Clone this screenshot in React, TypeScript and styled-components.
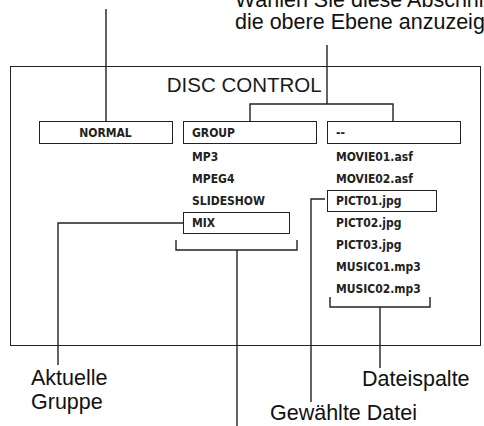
import React, { FC } from 'react'
import styled, { createGlobalStyle } from 'styled-components'

const GlobalStyle = createGlobalStyle`
	html, body {
		margin: 0;
		padding: 0;
		background: #ffffff;
	}
	body {
		font-family: 'Liberation Sans', Arial, sans-serif;
		color: #111111;
	}
`

type Entry = { label: string; boxed?: number }

const groups: Entry[] = [
	{ label: 'MP3' },
	{ label: 'MPEG4' },
	{ label: 'SLIDESHOW' },
	{ label: 'MIX', boxed: 107 }
]

const files: Entry[] = [
	{ label: 'MOVIE01.asf' },
	{ label: 'MOVIE02.asf' },
	{ label: 'PICT01.jpg', boxed: 110 },
	{ label: 'PICT02.jpg' },
	{ label: 'PICT03.jpg' },
	{ label: 'MUSIC01.mp3' },
	{ label: 'MUSIC02.mp3' }
]

const Leaders: FC = () => (
	<Lines width={484} height={426} viewBox="0 0 484 426">
		<g fill="none" stroke="#222" strokeWidth={1.4}>
			<path d="M106 9 V121" />
			<path d="M327 45 V104" />
			<path d="M250 121 V104 H393 V121" />
			<path d="M183 223 H58 V365" />
			<path d="M325 199 H311 V402" />
			<path d="M176 240 V250 H297 V240" />
			<path d="M237 250 V426" />
			<path d="M330 297 V307 H430 V297" />
			<path d="M380 307 V368" />
		</g>
	</Lines>
)

const App: FC = () => {
	return (
		<Page>
			<GlobalStyle />
			<Caption>
				Wählen Sie diese Abschnitte, um
				<br />
				die obere Ebene anzuzeigen.
			</Caption>

			<Panel>
				<Title>DISC CONTROL</Title>
				<Columns>
					<Column>
						<HeadBox $center>NORMAL</HeadBox>
					</Column>

					<Column>
						<HeadBox>GROUP</HeadBox>
						{groups.map((g) => (
							<Item key={g.label} $width={g.boxed}>
								{g.label}
							</Item>
						))}
					</Column>

					<Column>
						<HeadBox>--</HeadBox>
						{files.map((f) => (
							<Item key={f.label} $width={f.boxed}>
								{f.label}
							</Item>
						))}
					</Column>
				</Columns>
			</Panel>

			<Label $x={31} $y={366}>
				Aktuelle
				<br />
				Gruppe
			</Label>
			<Label $x={362} $y={367}>
				Dateispalte
			</Label>
			<Label $x={270} $y={401}>
				Gewählte Datei
			</Label>

			<Leaders />
		</Page>
	)
}

export default App

const Page = styled.div`
	position: relative;
	width: 484px;
	height: 426px;
	overflow: hidden;
	background: #fff;
`

const Caption = styled.div`
	height: 66px;
	padding-left: 235px;
	box-sizing: border-box;
	font-size: 21.5px;
	line-height: 22px;
	white-space: nowrap;
	margin-top: -11px;
	margin-bottom: 11px;
`

const Panel = styled.section`
	margin-left: 10px;
	width: 471px;
	height: 280px;
	box-sizing: border-box;
	border: 1.5px solid #222;
	padding: 8px 0 0 27.5px;
`

const Title = styled.h1`
	margin: 0 0 26px -30px;
	font-weight: normal;
	font-size: 20.5px;
	line-height: 20px;
	text-align: center;
	color: #1a1a1a;
`

const Columns = styled.div`
	display: grid;
	grid-template-columns: repeat(3, 134px);
	column-gap: 10px;
	align-items: start;
`

const Column = styled.div`
	display: flex;
	flex-direction: column;
	align-items: flex-start;
`

const listFont = `
	font-family: 'DejaVu Sans Condensed', 'DejaVu Sans', sans-serif;
	font-weight: bold;
	font-size: 12px;
	color: #222;
	white-space: nowrap;
`

const HeadBox = styled.div<{ $center?: boolean }>`
	${listFont}
	width: 134px;
	height: 23px;
	box-sizing: border-box;
	border: 1.5px solid #222;
	display: flex;
	align-items: center;
	justify-content: ${({ $center }) => ($center ? 'center' : 'flex-start')};
	padding-left: ${({ $center }) => ($center ? '0' : '8.5px')};
	margin-bottom: 2px;
`

const Item = styled.div<{ $width?: number }>`
	${listFont}
	height: 22px;
	box-sizing: border-box;
	display: flex;
	align-items: center;
	padding-left: 8.5px;
	width: ${({ $width }) => ($width ? `${$width}px` : 'auto')};
	border: 1.5px solid ${({ $width }) => ($width ? '#222' : 'transparent')};
`

const Label = styled.div<{ $x: number; $y: number }>`
	position: absolute;
	left: ${({ $x }) => $x}px;
	top: ${({ $y }) => $y}px;
	font-size: 21.5px;
	line-height: 24px;
	white-space: nowrap;
`

const Lines = styled.svg`
	position: absolute;
	left: 0;
	top: 0;
	pointer-events: none;
`
